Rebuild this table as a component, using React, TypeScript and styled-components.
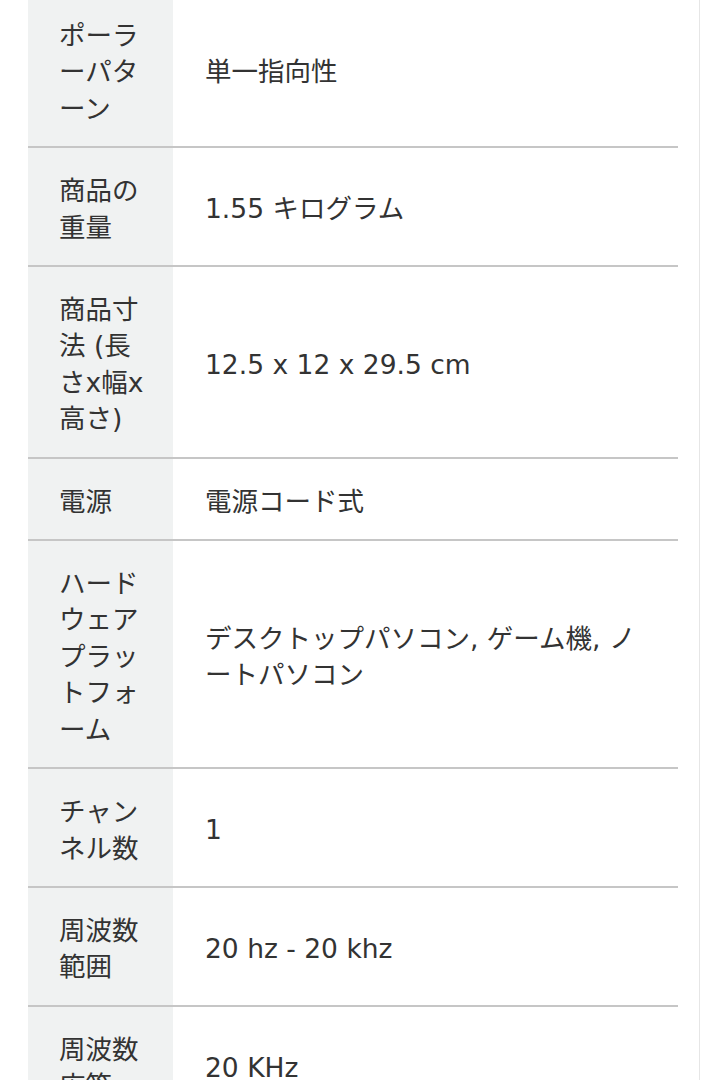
import styled, { createGlobalStyle } from "styled-components";

const GlobalStyle = createGlobalStyle`
  html, body {
    margin: 0;
    padding: 0;
    background: #ffffff;
  }
`;

const specs = [
  { label: "ポーラーパターン", value: "単一指向性" },
  { label: "商品の重量", value: "1.55 キログラム" },
  { label: "商品寸法 (長さx幅x高さ)", value: "12.5 x 12 x 29.5 cm" },
  { label: "電源", value: "電源コード式" },
  {
    label: "ハードウェアプラットフォーム",
    value: "デスクトップパソコン, ゲーム機, ノートパソコン",
  },
  { label: "チャンネル数", value: "1" },
  { label: "周波数範囲", value: "20 hz - 20 khz" },
  { label: "周波数応答", value: "20 KHz" },
];

export default function App() {
  return (
    <>
      <GlobalStyle />
      <Page>
        <SpecTable>
          {specs.map((spec, i) => (
            <Row key={spec.label} first={i === 0}>
              <Label>{spec.label}</Label>
              <Value>{spec.value}</Value>
            </Row>
          ))}
        </SpecTable>
      </Page>
    </>
  );
}

const Page = styled.div`
  width: 700px;
  height: 1080px;
  overflow: hidden;
  border-right: 1px solid #e6e6e6;
  padding-left: 28px;
  box-sizing: border-box;
`;

const SpecTable = styled.div`
  width: 650px;
  margin-top: -7px;
  display: flex;
  flex-direction: column;
  font-family: "DejaVu Sans", "Noto Sans CJK JP", sans-serif;
  font-size: 26.5px;
  line-height: 36.4px;
  color: #333333;
`;

const Row = styled.div<{ first?: boolean }>`
  display: grid;
  grid-template-columns: 145px 1fr;
  border-top: ${(p) => (p.first ? "none" : "2px solid #c6c6c6")};
`;

const Label = styled.div`
  background: #f0f2f2;
  padding: 25px 24px 19px 31px;
  word-break: break-all;
`;

const Value = styled.div`
  display: flex;
  align-items: center;
  padding: 25px 26px 19px 32px;
`;
